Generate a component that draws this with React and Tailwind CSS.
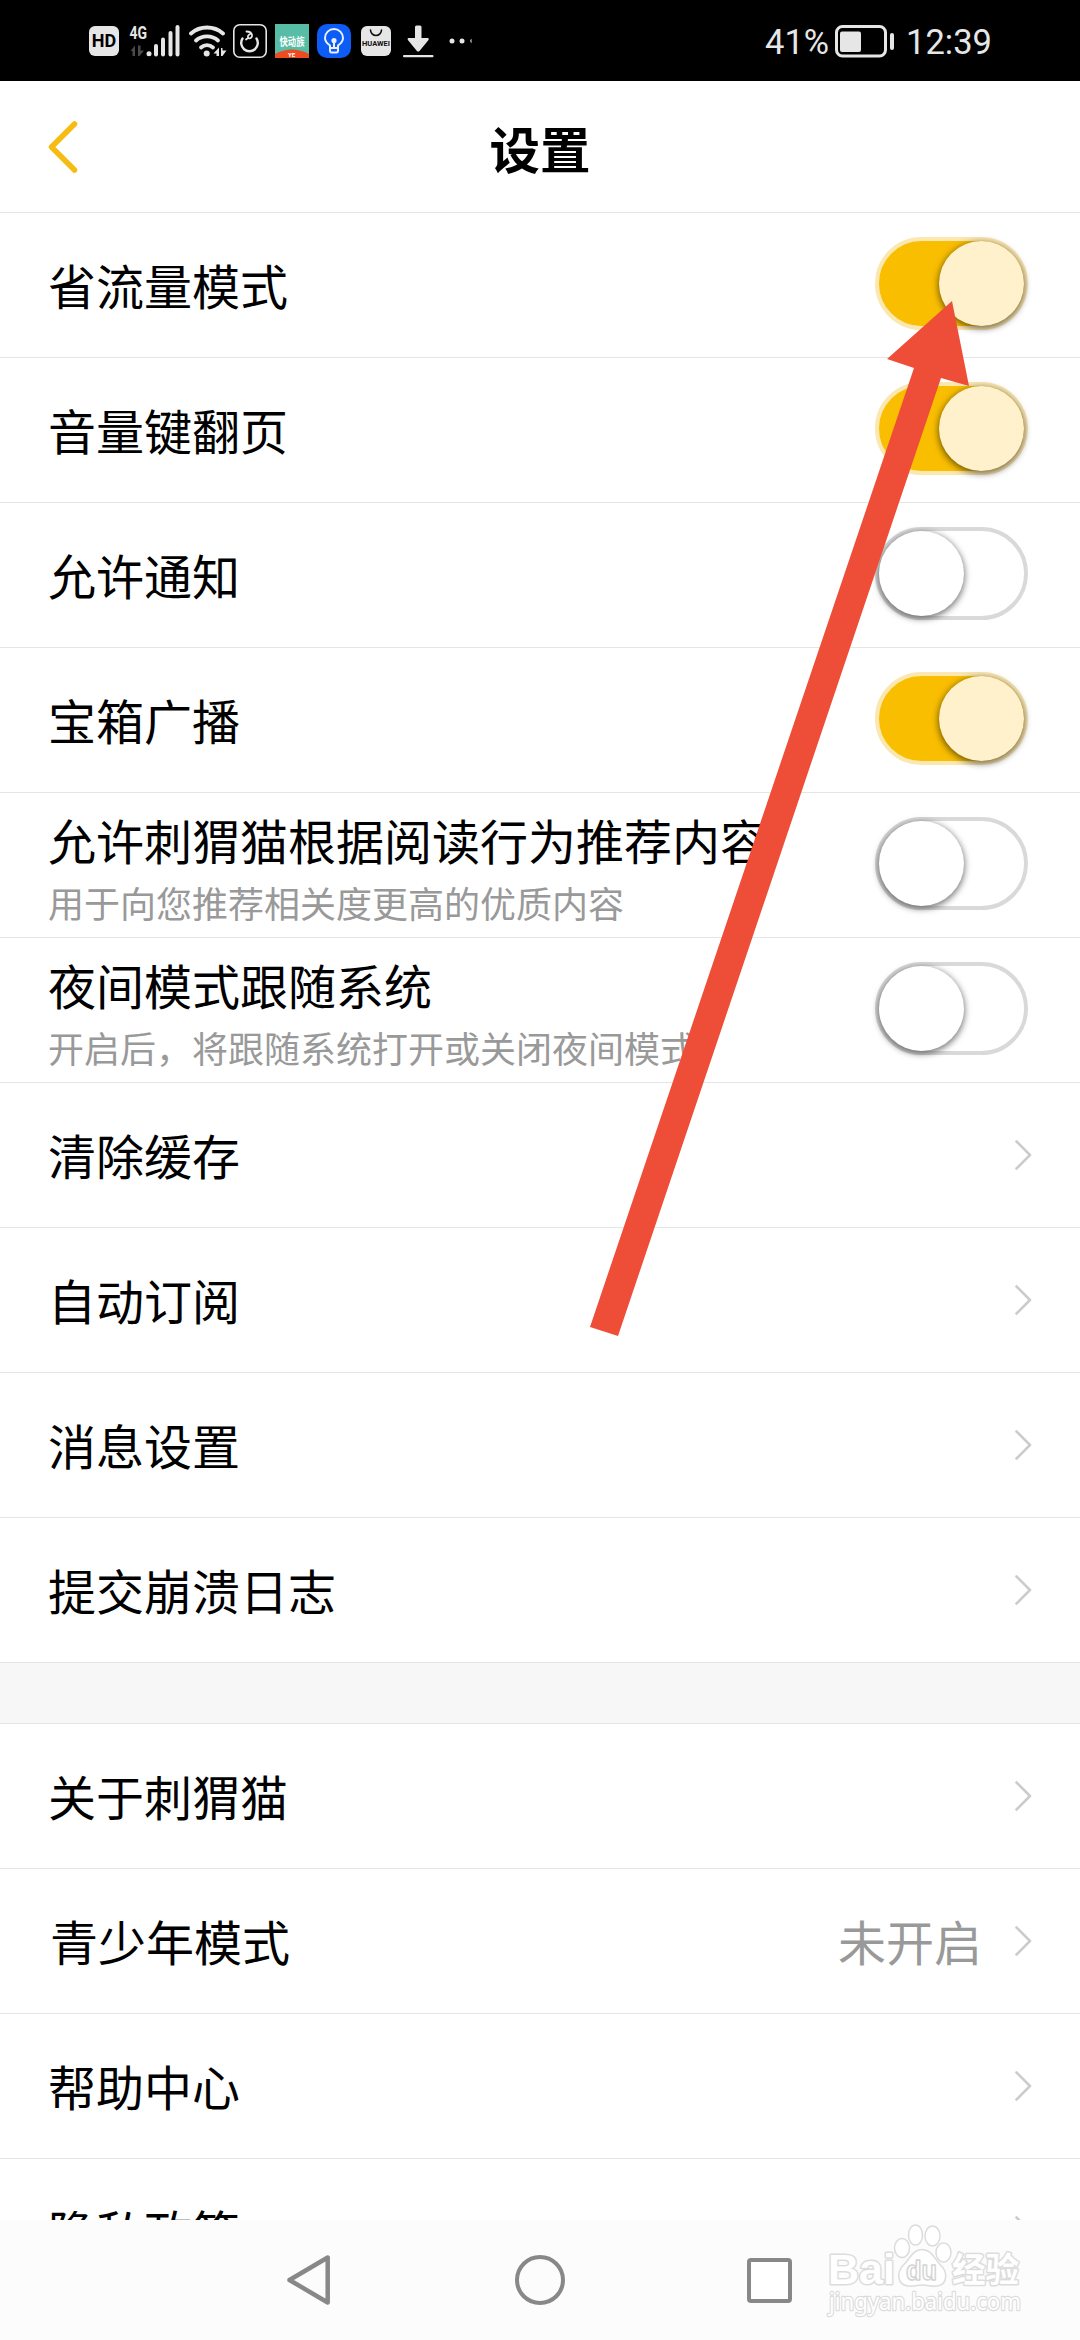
import React from 'react';

const toggleRows = [
  { title: '省流量模式', on: true },
  { title: '音量键翻页', on: true },
  { title: '允许通知', on: false },
  { title: '宝箱广播', on: true },
  { title: '允许刺猬猫根据阅读行为推荐内容', subtitle: '用于向您推荐相关度更高的优质内容', on: false },
  { title: '夜间模式跟随系统', subtitle: '开启后，将跟随系统打开或关闭夜间模式', on: false }
];

const linkRows = [
  { title: '清除缓存' },
  { title: '自动订阅' },
  { title: '消息设置' },
  { title: '提交崩溃日志' }
];

const aboutRows = [
  { title: '关于刺猬猫' },
  { title: '青少年模式', value: '未开启', indent: true },
  { title: '帮助中心' },
  { title: '隐私政策' }
];

function HdIcon() {
  return (
    <div className="ml-[89px] w-[30px] h-[30px] rounded-[6px] bg-[#e6e6e6] text-black flex items-center justify-center font-['Roboto',sans-serif] font-bold text-[18px] leading-none">
      HD
    </div>
  );
}

function SignalIcon() {
  return (
    <svg className="ml-[11px] w-[50px] h-[34px] overflow-visible" viewBox="130 23 50 34" fill="#e6e6e6">
      <text x="129.5" y="38" fontSize="18" fontWeight="700" textLength="17.5" lengthAdjust="spacingAndGlyphs" fontFamily="Roboto, sans-serif">4G</text>
      <path d="M130.5 50l4.500-5.500v10.500h-2.500v-5zM138 44.500h2.500v5h3.500l-4.500 5.500h-1.500z" fill="#4a4a4a" />
      <circle cx="149" cy="52.700" r="2.500" />
      <rect x="154" y="43" width="4" height="12.500" rx="2" />
      <rect x="161" y="36.500" width="4" height="19" rx="2" />
      <rect x="168.500" y="30" width="4" height="25.500" rx="2" />
      <rect x="175.500" y="24" width="4" height="31.500" rx="2" />
    </svg>
  );
}

function WifiIcon() {
  return (
    <svg className="ml-[9px] w-[38px] h-[34px]" viewBox="189 23 38 34" fill="none" stroke="#e6e6e6" strokeWidth="3.800" strokeLinecap="round">
      <path d="M191 32.500C200 24.500 214 24.500 223 32.500" />
      <path d="M196 39.500C202 34 212 34 218 39.500" />
      <path d="M201 46.500C204.500 43.200 209.500 43.200 213 46.500" />
      <circle cx="206.700" cy="52.500" r="3" fill="#e6e6e6" stroke="none" />
      <path d="M213.500 52.500l5.500-6v8.500h-2.500v-2.500zM221 47h1.500v2.500h4l-4 5.500h-1.500z" fill="#e6e6e6" stroke="none" />
    </svg>
  );
}

function FlameIcon() {
  return (
    <svg className="ml-[6px] w-[34px] h-[34px]" viewBox="233 24 34 34" fill="none" stroke="#e6e6e6" strokeLinecap="round" strokeLinejoin="round">
      <rect x="233.800" y="24.800" width="32.400" height="32.400" rx="6" strokeWidth="1.600" />
      <path d="M242.500 38.500a8.300 8.300 0 1 0 14 0" strokeWidth="2.400" />
      <path d="M246.500 31.500c3 0 5 1 5.500 3.500s-2 4-3.500 3-.500-3.500 3-4.500M248 38l-2 1.500" strokeWidth="1.800" />
    </svg>
  );
}

function BikeAppIcon() {
  return (
    <svg className="ml-[8px] w-[34px] h-[34px] overflow-visible" viewBox="275 24 34 34">
      <rect x="275" y="24" width="34" height="34" fill="#57bda6" />
      <path d="M275 54q17-9 34 0v4h-34z" fill="#f04a22" />
      <text x="279.500" y="45.500" fontSize="11" fontWeight="700" fill="#fff" textLength="25" lengthAdjust="spacingAndGlyphs" fontFamily="Noto Sans CJK SC, sans-serif">快动族</text>
      <text x="288" y="56.500" fontSize="6" fontWeight="700" fill="#fff" fontFamily="Roboto, sans-serif">YE</text>
    </svg>
  );
}

function BulbIcon() {
  return (
    <svg className="ml-[8px] w-[34px] h-[34px]" viewBox="317 24 34 34" fill="none" stroke="#e8efff" strokeWidth="2" strokeLinecap="round" strokeLinejoin="round">
      <rect x="317" y="24" width="34" height="34" rx="10" fill="#0d5cf5" stroke="none" />
      <path d="M330 48v-2.500c-3-2-5-4-5-7.500a9 9 0 0 1 18 0c0 3.500-2 5.500-5 7.500v2.500z" />
      <path d="M330 48v2.500q0 2 1.500 2h5q1.500 0 1.500-2v-2.500M334 42v6" />
      <circle cx="334" cy="40.500" r="1.600" fill="#e8efff" />
    </svg>
  );
}

function HuaweiIcon() {
  return (
    <div className="ml-[10px] w-[30px] h-[30px] rounded-[6px] bg-[#e6e6e6] flex flex-col items-center">
      <svg className="w-[14px] h-[8px] mt-[3px]" viewBox="0 0 14 8" fill="none" stroke="#111" strokeWidth="1.600" strokeLinecap="round">
        <path d="M1.500 1a5.500 5.500 0 0 0 11 0" />
      </svg>
      <svg className="w-[30px] h-[10px] mt-[2px]" viewBox="0 0 30 10">
        <text x="1" y="7" fontSize="7" fontWeight="700" fill="#111" textLength="28" lengthAdjust="spacingAndGlyphs" fontFamily="Roboto, sans-serif">HUAWEI</text>
      </svg>
    </div>
  );
}

function DownloadIcon() {
  return (
    <svg className="ml-[12px] w-[31px] h-[34px]" viewBox="403 23 31 34" fill="#e6e6e6">
      <path d="M415 26q0-1.500 1.500-1.500h3.500q1.500 0 1.500 1.500v11h6.500q1.500.500.500 2l-9 11q-1.300 1.200-2.600 0l-9-11q-1-1.500.500-2h6.600z" />
      <rect x="403" y="54" width="30.500" height="2.200" rx="1" />
    </svg>
  );
}

function StatusBar() {
  return (
    <div className="flex items-center h-[81px] shrink-0 bg-black">
      <HdIcon />
      <SignalIcon />
      <WifiIcon />
      <FlameIcon />
      <BikeAppIcon />
      <BulbIcon />
      <HuaweiIcon />
      <DownloadIcon />
      <svg className="ml-[15px] w-[23px] h-[6px]" viewBox="0 0 23 6" fill="#e6e6e6">
        <circle cx="3" cy="3" r="2.500" />
        <circle cx="13" cy="3" r="2.500" />
        <path d="M22.500.800v4.400q-2.500-2.200 0-4.400z" />
      </svg>
      <div className="ml-auto mr-[88px] flex items-center text-[#e6e6e6] font-['Roboto',sans-serif] text-[34.5px] leading-none">
        <span className="pt-[3px]">41%</span>
        <svg className="ml-[5px] w-[60px] h-[34px]" viewBox="834 23 60 34">
          <rect x="836.500" y="25.500" width="49" height="29.500" rx="6" fill="none" stroke="#e6e6e6" strokeWidth="3" />
          <rect x="840" y="30.500" width="21" height="20.500" rx="2" fill="#e6e6e6" />
          <rect x="890" y="32" width="4" height="17" rx="2" fill="#e6e6e6" />
        </svg>
        <span className="ml-[12px] pt-[3px]">12:39</span>
      </div>
    </div>
  );
}

function Header() {
  return (
    <div className="grid grid-cols-3 items-center h-[132px] shrink-0 border-b border-[#e5e5e5]">
      <svg className="ml-[47px] w-8 h-[66px]" viewBox="0 0 32 66" fill="none" stroke="#f5bd14" strokeWidth="5.500" strokeLinecap="round" strokeLinejoin="round">
        <path d="M27.500 10L4.500 33l23 23" />
      </svg>
      <h1 className="text-center text-[50.5px] leading-[72px] font-bold text-black">设置</h1>
    </div>
  );
}

function Toggle({ on }) {
  return on ? (
    <div className="flex justify-end w-[153px] h-[93px] shrink-0 mb-[3px] rounded-full border-[4px] border-[#fbe7b0] bg-[#f9be00]">
      <div className="w-[85px] h-[85px] rounded-full bg-[#fff1cc] shadow-[0_2px_6px_1px_rgba(0,0,0,0.5)]" />
    </div>
  ) : (
    <div className="flex w-[153px] h-[93px] shrink-0 mb-[3px] rounded-full border-[4px] border-[#d9d9d9] bg-white">
      <div className="w-[85px] h-[85px] rounded-full bg-white shadow-[0_2px_6px_1px_rgba(0,0,0,0.5)]" />
    </div>
  );
}

function Chevron() {
  return (
    <svg className="w-[18px] h-[32px] shrink-0" viewBox="0 0 18 32" fill="none" stroke="#cccccc" strokeWidth="2.600" strokeLinecap="round" strokeLinejoin="round">
      <path d="M2.500 2.500L16 16 2.500 29.500" />
    </svg>
  );
}

function ToggleRow({ title, subtitle, on }) {
  return (
    <div className="flex items-center justify-between h-[145px] shrink-0 pl-12 pr-[52px] border-b border-[#e5e5e5]">
      <div className={subtitle ? 'flex flex-col pt-[4px] whitespace-nowrap' : 'flex flex-col pb-[3px] whitespace-nowrap'}>
        <span className="text-5xl leading-[70px] text-black">{title}</span>
        {subtitle && <span className="text-4xl leading-[56px] text-[#999999]">{subtitle}</span>}
      </div>
      <Toggle on={on} />
    </div>
  );
}

function LinkRow({ title, value, indent }) {
  return (
    <div className="flex items-center justify-between h-[145px] shrink-0 pl-12 pr-[48px] border-b border-[#e5e5e5]">
      <span className={indent ? 'pl-[2px] pb-[3px] text-5xl leading-[70px] text-black' : 'pb-[3px] text-5xl leading-[70px] text-black'}>{title}</span>
      <div className="flex items-center gap-[32px]">
        {value && <span className="pb-[3px] text-5xl leading-[70px] text-[#999999]">{value}</span>}
        <Chevron />
      </div>
    </div>
  );
}

function NavBar() {
  return (
    <div className="flex items-center h-[120px] shrink-0 bg-[#fcfcfc]">
      <svg className="ml-[285px] w-[50px] h-[54px]" viewBox="0 0 50 54" fill="none" stroke="#888888" strokeWidth="4.500" strokeLinejoin="round">
        <path d="M42.700 4.500v45L4.500 27z" />
      </svg>
      <div className="ml-[180px] w-[50px] h-[50px] rounded-full border-[4px] border-[#888888]" />
      <div className="ml-[182px] w-[45px] h-[45px] rounded-[4px] border-[4px] border-[#888888] bg-white" />
    </div>
  );
}

function Watermark() {
  return (
    <svg className="absolute left-[820px] top-[2220px] w-[210px] h-[100px] overflow-visible" viewBox="820 2220 210 100" fill="#ffffff" stroke="#dcdcdc" strokeWidth="1.500" strokeLinejoin="round">
      <g strokeWidth="3" style={{ paintOrder: 'stroke' }}>
        <text x="828" y="2284" fontSize="43" fontWeight="700" textLength="67" lengthAdjust="spacingAndGlyphs" fontFamily="Liberation Sans, sans-serif">Bai</text>
        <text x="952" y="2282" fontSize="34" fontWeight="700" textLength="67" lengthAdjust="spacingAndGlyphs" fontFamily="Noto Sans CJK SC, sans-serif">经验</text>
        <text x="829" y="2310" fontSize="23.500" strokeWidth="2.500" textLength="192" lengthAdjust="spacingAndGlyphs" fontFamily="Noto Sans, sans-serif">jingyan.baidu.com</text>
      </g>
      <ellipse cx="902" cy="2248" rx="7.500" ry="9.500" />
      <ellipse cx="915.500" cy="2235" rx="7" ry="10" />
      <ellipse cx="932.500" cy="2236" rx="7.500" ry="10" />
      <ellipse cx="943.500" cy="2252.500" rx="7.500" ry="9.500" />
      <path d="M922 2249.500c10 0 12 9 18 15 8 7 8 20-3 21.500-5 .700-9-1-15-1s-9 1.700-14 1c-12-1.500-11-15-4-21.500 6-6 9-15 18-15z" />
      <text x="906" y="2279.500" fontSize="27" fontWeight="700" stroke="#d4d4d4" textLength="31" lengthAdjust="spacingAndGlyphs" fontFamily="Liberation Sans, sans-serif">du</text>
    </svg>
  );
}

export default function App() {
  return (
    <div className="relative flex flex-col w-[1080px] h-[2340px] overflow-hidden bg-white font-['Noto_Sans_CJK_SC',sans-serif]">
      <StatusBar />
      <Header />

      <div className="flex flex-col flex-1 min-h-0 overflow-hidden">
        {toggleRows.map((row) => (
          <ToggleRow key={row.title} {...row} />
        ))}
        {linkRows.map((row) => (
          <LinkRow key={row.title} {...row} />
        ))}
        <div className="h-[61px] shrink-0 bg-[#f7f7f7] border-b border-[#e5e5e5]" />
        {aboutRows.map((row) => (
          <LinkRow key={row.title} {...row} />
        ))}
      </div>

      <NavBar />

      {/* Pointer arrow */}
      <svg className="absolute left-0 top-0 w-[1080px] h-[2340px] pointer-events-none" viewBox="0 0 1080 2340">
        <path d="M952 301L969 386L941 378L618 1336L590 1327L914 368L887 359z" fill="#ee4e38" />
      </svg>
      <Watermark />
    </div>
  );
}
